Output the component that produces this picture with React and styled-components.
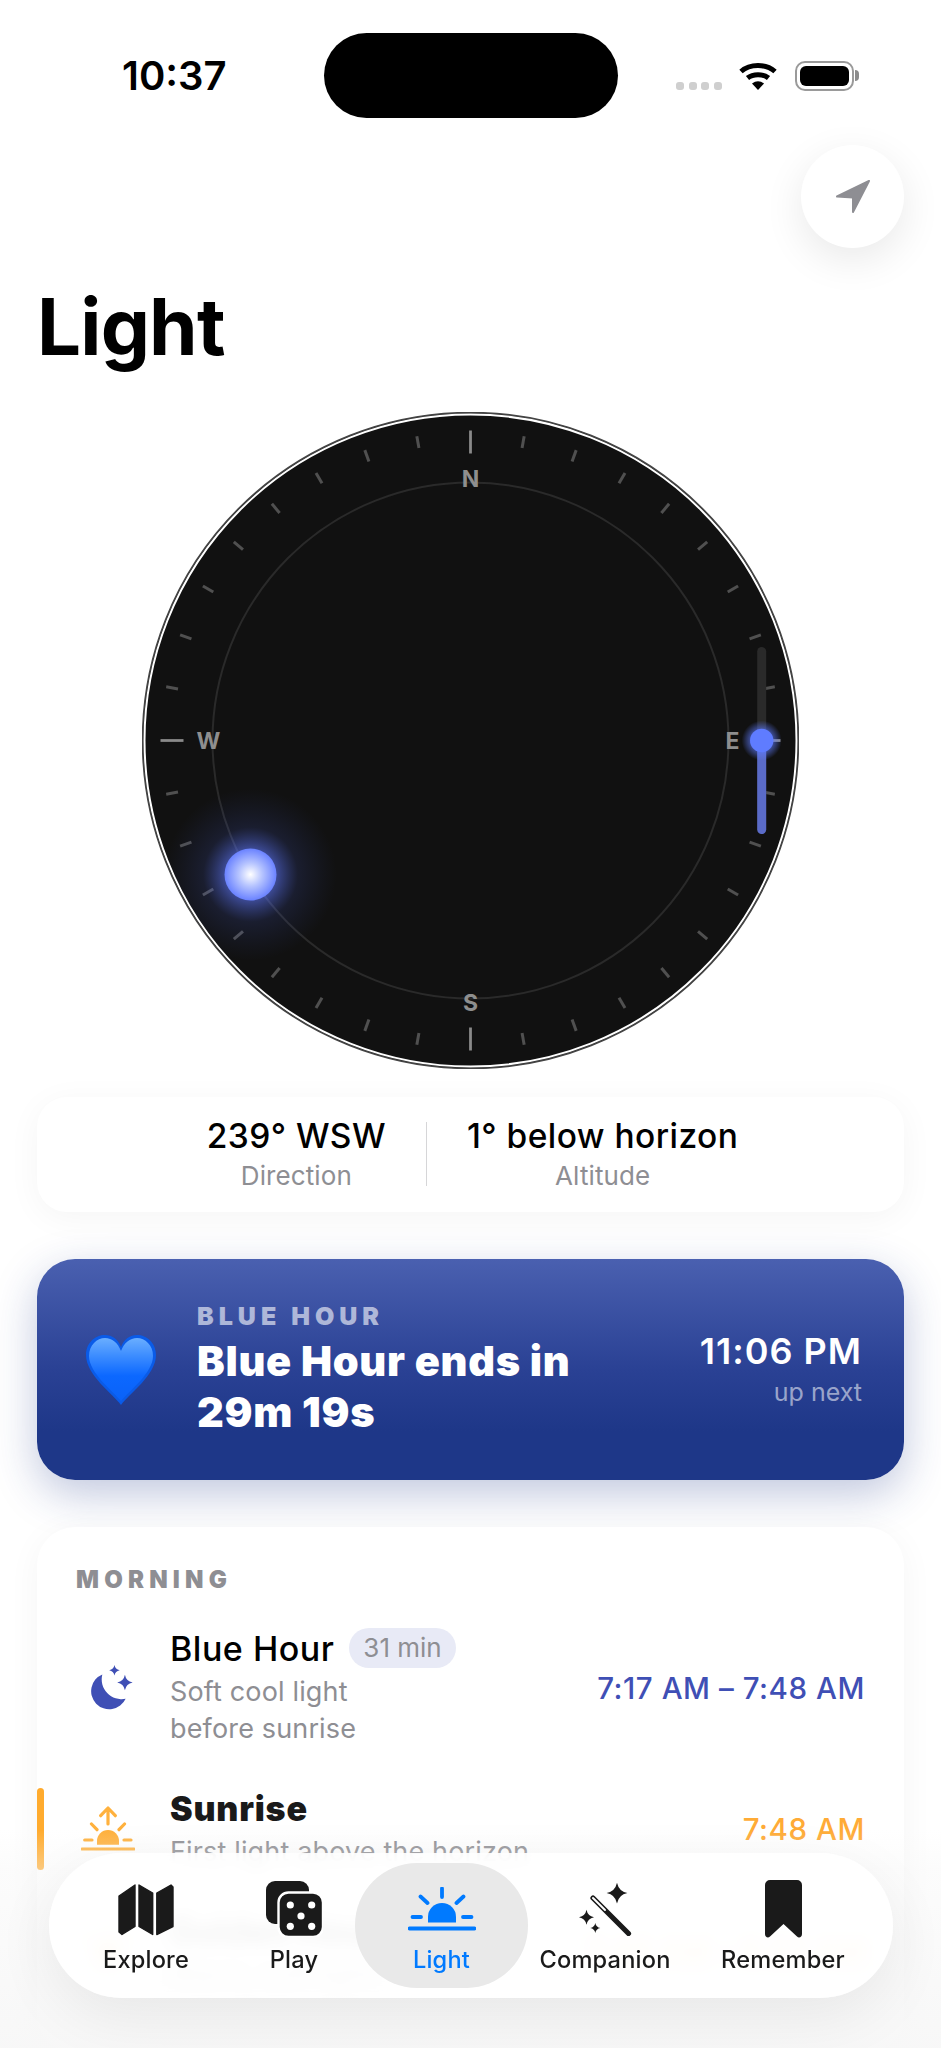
import React from "react"
import styled, { createGlobalStyle } from "styled-components"

const GlobalStyle = createGlobalStyle`
  html, body {
    margin: 0;
    padding: 0;
    background: #fff;
    font-family: Inter, "Liberation Sans", sans-serif;
    -webkit-font-smoothing: antialiased;
  }
`

const Screen = styled.div`
  position: relative;
  width: 941px;
  height: 2048px;
  overflow: hidden;
  background: #fff;
  padding: 0 37px;
  box-sizing: border-box;
`

const StatusBar = styled.div`
  display: grid;
  grid-template-columns: 287px 294px 1fr;
  align-items: center;
  padding-top: 33px;
  height: 85px;
`

const Clock = styled.div`
  padding-left: 85px;
  font-size: 40px;
  font-weight: 600;
  color: #000;
`

const Island = styled.div`
  height: 85px;
  border-radius: 43px;
  background: #000;
`

const StatusIcons = styled.div`
  display: flex;
  align-items: center;
  padding-left: 58px;
`

const SignalDots = styled.div`
  display: flex;
  gap: 4.5px;
  margin: 21px 17px 0 0;
`

const SignalDot = styled.span`
  width: 8px;
  height: 8px;
  border-radius: 3px;
  background: #cfcfcf;
`

const Battery = styled.div`
  position: relative;
  box-sizing: border-box;
  width: 59px;
  height: 30px;
  margin-left: 18px;
  padding: 3px;
  border: 2px solid #9a9a9a;
  border-radius: 10px;

  &::before {
    content: "";
    display: block;
    height: 100%;
    border-radius: 6px;
    background: #000;
  }

  &::after {
    content: "";
    position: absolute;
    right: -7px;
    top: 7px;
    width: 4px;
    height: 11px;
    border-radius: 0 4px 4px 0;
    background: #8a8a8a;
  }
`

const LocateRow = styled.div`
  display: flex;
  justify-content: flex-end;
  margin-top: 27px;
`

const LocateButton = styled.button`
  display: flex;
  align-items: center;
  justify-content: center;
  width: 103px;
  height: 103px;
  padding: 0;
  border: 0;
  border-radius: 50%;
  background: #fff;
  box-shadow: 0 12px 40px rgba(0, 0, 0, 0.09);
`

const Title = styled.h1`
  margin: 32px 0 0;
  font-size: 78px;
  line-height: 94px;
  font-weight: 700;
  letter-spacing: -0.8px;
  color: #000;
`

const DialWrap = styled.div`
  display: flex;
  justify-content: center;
  margin-top: 38px;
`

const Card = styled.section`
  background: #fff;
  box-shadow: 0 6px 34px rgba(0, 0, 0, 0.045);
`

const ReadoutCard = styled(Card)`
  display: flex;
  justify-content: center;
  gap: 40px;
  margin-top: 28px;
  padding: 19px 0 20px 4px;
  border-radius: 30px;
`

const Readout = styled.div`
  text-align: center;
`

const ReadoutValue = styled.div`
  font-size: 33.5px;
  line-height: 40px;
  font-weight: 500;
  letter-spacing: 0.45px;
  color: #000;
`

const ReadoutLabel = styled.div`
  margin-top: 4px;
  font-size: 26px;
  line-height: 32px;
  letter-spacing: 0.1px;
  color: #8e8e93;
`

const ReadoutDivider = styled.div`
  width: 1px;
  margin: 6px 0;
  background: #d6d6d8;
`

const NextCard = styled.section`
  display: flex;
  align-items: center;
  gap: 41px;
  height: 221px;
  box-sizing: border-box;
  margin-top: 47px;
  padding: 0 42px 0 49px;
  border-radius: 38px;
  color: #fff;
  background: linear-gradient(180deg, #4a60b0 0%, #2a4194 50%, #1e3788 78%);
  box-shadow: 0 14px 44px rgba(30, 55, 136, 0.28);
`

const NextBody = styled.div`
  flex: 1;
`

const NextEyebrow = styled.div`
  font-size: 25px;
  line-height: 30px;
  font-weight: 900;
  letter-spacing: 5px;
  color: rgba(255, 255, 255, 0.6);
`

const NextTitle = styled.div`
  margin-top: 5px;
  font-size: 41.5px;
  line-height: 51px;
  font-weight: 900;
  letter-spacing: 0.7px;
`

const NextSide = styled.div`
  text-align: right;
`

const NextTime = styled.div`
  font-size: 36px;
  line-height: 40px;
  font-weight: 600;
  letter-spacing: 1px;
`

const NextHint = styled.div`
  margin-top: 5px;
  font-size: 25px;
  line-height: 32px;
  color: rgba(255, 255, 255, 0.55);
`

const ScheduleCard = styled(Card)`
  margin-top: 47px;
  padding: 38px 0 60px;
  border-radius: 38px;
`

const SectionLabel = styled.div`
  padding-left: 39px;
  margin-bottom: 33px;
  font-size: 24px;
  line-height: 30px;
  font-weight: 900;
  letter-spacing: 5.2px;
  color: #8e8e93;
`

const Rows = styled.div`
  display: flex;
  flex-direction: column;
  gap: 41px;
`

const Row = styled.div`
  position: relative;
  display: grid;
  grid-template-columns: 64px 1fr auto;
  align-items: center;
  column-gap: 30px;
  padding: 0 39px 0 39px;
`

const RowAccent = styled.span`
  position: absolute;
  left: 0;
  top: 0;
  bottom: 0;
  width: 7px;
  border-radius: 4px;
  background: #ffab2e;
`

const RowIcon = styled.div`
  display: flex;
  justify-content: center;
  padding-left: ${props => props.$nudge || 0}px;
`

const NameLine = styled.div`
  display: flex;
  align-items: center;
  gap: 15px;
  height: 40px;
`

const RowName = styled.div`
  font-size: 34px;
  font-weight: ${props => (props.$active ? 900 : 500)};
  letter-spacing: ${props => (props.$active ? 0.8 : 0.5)}px;
  color: ${props => (props.$active ? "#1a1a1a" : "#000")};
`

const Chip = styled.span`
  height: 40px;
  padding: 0 14px;
  border-radius: 20px;
  font-size: 26px;
  line-height: 40px;
  color: #8e8e93;
  background: #e8eaf6;
`

const RowSub = styled.div`
  margin-top: 5px;
  font-size: 27px;
  line-height: 37px;
  letter-spacing: 0.15px;
  color: #8e8e93;
`

const RowTime = styled.div`
  font-size: 29.5px;
  font-weight: 500;
  letter-spacing: 0.55px;
  color: ${props => props.$color};
`

const BottomFade = styled.div`
  position: absolute;
  left: 0;
  right: 0;
  bottom: 0;
  height: 218px;
  background: linear-gradient(
    180deg,
    rgba(247, 247, 247, 0) 0%,
    rgba(247, 247, 247, 0.4) 18%,
    rgba(247, 247, 247, 0.95) 100%
  );
`

const TabBar = styled.nav`
  position: absolute;
  left: 49px;
  top: 1853px;
  display: grid;
  grid-template-columns: 174px 122px 173px 154px 202px;
  box-sizing: border-box;
  width: 844px;
  height: 145px;
  padding: 10px;
  border-radius: 73px;
  background: rgba(255, 255, 255, 0.87);
  backdrop-filter: blur(7px);
  box-shadow: 0 18px 60px rgba(0, 0, 0, 0.07);
`

const Tab = styled.div`
  display: flex;
  flex-direction: column;
  align-items: center;
  border-radius: 62px;
  background: ${props => (props.$active ? "#e9e9e9" : "transparent")};
  color: ${props => (props.$active ? "#007aff" : "#1a1a1a")};
`

const TabIcon = styled.div`
  display: flex;
  align-items: center;
  justify-content: center;
  height: 66px;
  margin-top: 13px;
`

const TabLabel = styled.div`
  margin-top: 4px;
  font-size: 23.6px;
  line-height: 28px;
  font-weight: 500;
  letter-spacing: 0.2px;
`

const star = (cx, cy, r) => {
  const k = r * 0.16
  return `M${cx} ${cy - r}Q${cx + k} ${cy - k} ${cx + r} ${cy}Q${cx + k} ${cy + k} ${cx} ${cy + r}Q${cx - k} ${cy + k} ${cx - r} ${cy}Q${cx - k} ${cy - k} ${cx} ${cy - r}Z`
}

const Dial = () => {
  const ticks = []
  for (let deg = 0; deg < 360; deg += 10) {
    if (deg % 90 === 0) continue
    ticks.push(
      <line
        key={deg}
        x1="0"
        y1="-297"
        x2="0"
        y2="-309"
        stroke="#505050"
        strokeWidth="3"
        transform={`rotate(${deg})`}
      />
    )
  }
  return (
    <svg width="657" height="657" viewBox="-328.5 -328.5 657 657">
      <defs>
        <radialGradient id="sunCore">
          <stop offset="0%" stopColor="#ffffff" />
          <stop offset="45%" stopColor="#b6c4ff" />
          <stop offset="100%" stopColor="#6a82ff" />
        </radialGradient>
        <radialGradient id="sunGlow">
          <stop offset="30%" stopColor="#5f78ff" stopOpacity="0.55" />
          <stop offset="55%" stopColor="#4a60d0" stopOpacity="0.16" />
          <stop offset="100%" stopColor="#3a4fb0" stopOpacity="0" />
        </radialGradient>
        <radialGradient id="knobGlow">
          <stop offset="55%" stopColor="#5f7cff" stopOpacity="0.6" />
          <stop offset="100%" stopColor="#5f7cff" stopOpacity="0" />
        </radialGradient>
        <clipPath id="diskClip">
          <circle r="325" />
        </clipPath>
      </defs>
      <circle r="328" fill="#111" stroke="#444" strokeWidth="1.5" />
      <circle r="326" fill="#111" stroke="#fff" strokeWidth="2" />
      <circle r="258" fill="none" stroke="#2a2a2a" strokeWidth="2" />
      {ticks}
      {[0, 90, 180, 270].map(deg => (
        <line
          key={deg}
          x1="0"
          y1="-287"
          x2="0"
          y2="-310"
          stroke="#8a8a8a"
          strokeWidth="2.8"
          transform={`rotate(${deg})`}
        />
      ))}
      <g fill="#8e8e8e" fontFamily="Inter, sans-serif" fontSize="23" fontWeight="700" textAnchor="middle">
        <text x="0" y="-254">N</text>
        <text x="262" y="8">E</text>
        <text x="0" y="270">S</text>
        <text x="-262" y="8">W</text>
      </g>
      <g clipPath="url(#diskClip)">
        <circle cx="-220" cy="134" r="86" fill="url(#sunGlow)" />
      </g>
      <circle cx="-220" cy="134" r="26" fill="url(#sunCore)" />
      <rect x="286.7" y="-93.5" width="9" height="187" rx="4.5" fill="#2a2a2a" />
      <path d="M286.7 0H295.7V89a4.5 4.5 0 0 1-9 0Z" fill="#5a6bc8" />
      <circle cx="291.2" cy="0" r="20" fill="url(#knobGlow)" />
      <circle cx="291.2" cy="0" r="11.7" fill="#5f7cff" />
    </svg>
  )
}

const Wifi = () => (
  <svg width="38" height="29" viewBox="0 0 38 29" fill="none" stroke="#000" strokeWidth="5">
    <path d="M2 10.5C11 2.5 27 2.5 36 10.5" />
    <path d="M8.5 17C14 12.5 24 12.5 29.5 17" />
    <path d="M13 22.5Q19 18 25 22.5L19 29Z" fill="#000" stroke="none" />
  </svg>
)

const LocateIcon = () => (
  <svg width="36" height="35" viewBox="0 0 36 35">
    <path
      d="M34 2L2 17.5L18 18.5L18 33Z"
      fill="#8e8e93"
      stroke="#8e8e93"
      strokeWidth="2"
      strokeLinejoin="round"
    />
  </svg>
)

const Heart = () => (
  <svg width="70" height="70" viewBox="0 0 70 70">
    <defs>
      <linearGradient id="heartFill" x1="0" y1="0" x2="0" y2="1">
        <stop offset="0%" stopColor="#6aaeff" />
        <stop offset="28%" stopColor="#3d8dff" />
        <stop offset="60%" stopColor="#0c68ff" />
        <stop offset="100%" stopColor="#0a62f8" />
      </linearGradient>
    </defs>
    <path
      d="M35 70C27 59 0 40 0 20C0 8 9 0 19 0C26 0 32 4 35 12C38 4 44 0 51 0C61 0 70 8 70 20C70 40 43 59 35 70Z"
      fill="#0a5be8"
    />
    <path
      d="M35 66C27 56 3 38 3 21C3 10 11 3 19 3C26 3 32 8 35 16C38 8 44 3 51 3C59 3 67 10 67 21C67 38 43 56 35 66Z"
      fill="url(#heartFill)"
    />
  </svg>
)

const MoonIcon = () => (
  <svg width="44" height="45" viewBox="0 0 42 43" fill="#3f4fb5">
    <path d="M12.7 9A17.3 17.3 0 1 0 35 32.3A19 19 0 0 1 12.7 9Z" />
    <path d={star(34.3, 16.7, 7.4)} />
    <path d={star(24.3, 5, 5)} />
  </svg>
)

const SunriseIcon = () => (
  <svg width="54" height="46" viewBox="-1 -2 54 46" fill="none" stroke="#ffb13d" strokeWidth="3.2" strokeLinecap="round" strokeLinejoin="round">
    <path d="M26 16V0M18.7 7.7L26 0L33.3 7.7" />
    <path d="M9.5 16L15 21.7M42.5 16L37 21.7M2.7 32H10M42 32H49M0 41H52" />
    <path d="M15 36.7V33A11 11 0 0 1 37 33V36.7Z" fill="#ffb13d" stroke="none" />
  </svg>
)

const GoldenIcon = () => (
  <svg width="54" height="46" viewBox="-1 -2 54 46" fill="none" stroke="#ffc566" strokeWidth="3.2" strokeLinecap="round">
    <circle cx="26" cy="22" r="11" fill="#ffc566" stroke="none" />
    <path d="M26 2V6M9 8L12 11M43 8L40 11" />
  </svg>
)

const MapIcon = () => (
  <svg width="56" height="53" viewBox="0 0 56 53" fill="#1a1a1a" stroke="#1a1a1a" strokeWidth="1.4" strokeLinejoin="round">
    <path d="M1 13L17 2V43.5L4 51.5L1 49Z" />
    <path d="M21 2L34.7 10V51.5L21 43.5Z" />
    <path d="M38.8 10L53 2L55 4V43.5L38.8 51.5Z" />
  </svg>
)

const DiceIcon = () => (
  <svg width="57" height="56" viewBox="0 0 57 56">
    <rect x="0" y="0" width="43" height="43" rx="9" fill="#1a1a1a" />
    <rect x="12.5" y="11.5" width="44.5" height="44.5" rx="10" fill="#1a1a1a" stroke="#fff" strokeWidth="2.4" />
    <g fill="#fff">
      <circle cx="24.3" cy="24" r="3.6" />
      <circle cx="45.7" cy="24" r="3.6" />
      <circle cx="35" cy="35" r="3.6" />
      <circle cx="24.3" cy="45.3" r="3.6" />
      <circle cx="45.7" cy="45.3" r="3.6" />
    </g>
  </svg>
)

const LightIcon = () => (
  <svg width="68" height="44" viewBox="0 0 68 44" fill="none" stroke="#007aff" strokeWidth="3.8" strokeLinecap="round">
    <path d="M34 1.5V10M12.5 9.5L19.5 16M55.5 9.5L48.5 16M4.5 30H13M55 30H63.5M1.5 41.5H66.5" />
    <path d="M20 35.5V30A14 14 0 0 1 48 30V35.5Z" fill="#007aff" stroke="none" />
  </svg>
)

const WandIcon = () => (
  <svg width="53" height="53" viewBox="0 0 53 53" fill="#1a1a1a">
    <path d={star(38, 10, 10.4)} />
    <path d={star(7.5, 34.3, 7.5)} />
    <path d={star(16.3, 45, 5)} />
    <line x1="14" y1="15" x2="49.5" y2="50.5" stroke="#1a1a1a" strokeWidth="5.2" strokeLinecap="round" />
    <line x1="14" y1="15" x2="26" y2="27" stroke="#fff" strokeWidth="2" strokeLinecap="round" />
  </svg>
)

const BookmarkIcon = () => (
  <svg width="37" height="58" viewBox="0 0 37 58" fill="#1a1a1a">
    <path d="M5 0H32A5 5 0 0 1 37 5V54C37 57 34 58.5 32 56.5L18.5 44L5 56.5C3 58.5 0 57 0 54V5A5 5 0 0 1 5 0Z" />
  </svg>
)

const tabs = [
  { label: "Explore", icon: <MapIcon /> },
  { label: "Play", icon: <DiceIcon /> },
  { label: "Light", icon: <LightIcon />, active: true },
  { label: "Companion", icon: <WandIcon /> },
  { label: "Remember", icon: <BookmarkIcon /> },
]

export default function App() {
  return (
    <Screen>
      <GlobalStyle />
      <StatusBar>
        <Clock>10:37</Clock>
        <Island />
        <StatusIcons>
          <SignalDots>
            <SignalDot />
            <SignalDot />
            <SignalDot />
            <SignalDot />
          </SignalDots>
          <Wifi />
          <Battery />
        </StatusIcons>
      </StatusBar>

      <LocateRow>
        <LocateButton aria-label="Locate">
          <LocateIcon />
        </LocateButton>
      </LocateRow>

      <Title>Light</Title>

      <DialWrap>
        <Dial />
      </DialWrap>

      <ReadoutCard>
        <Readout>
          <ReadoutValue>239° WSW</ReadoutValue>
          <ReadoutLabel>Direction</ReadoutLabel>
        </Readout>
        <ReadoutDivider />
        <Readout>
          <ReadoutValue>1° below horizon</ReadoutValue>
          <ReadoutLabel>Altitude</ReadoutLabel>
        </Readout>
      </ReadoutCard>

      <NextCard>
        <Heart />
        <NextBody>
          <NextEyebrow>BLUE HOUR</NextEyebrow>
          <NextTitle>
            Blue Hour ends in
            <br />
            29m 19s
          </NextTitle>
        </NextBody>
        <NextSide>
          <NextTime>11:06 PM</NextTime>
          <NextHint>up next</NextHint>
        </NextSide>
      </NextCard>

      <ScheduleCard>
        <SectionLabel>MORNING</SectionLabel>
        <Rows>
          <Row>
            <RowIcon $nudge={6}>
              <MoonIcon />
            </RowIcon>
            <div>
              <NameLine>
                <RowName>Blue Hour</RowName>
                <Chip>31 min</Chip>
              </NameLine>
              <RowSub>
                Soft cool light
                <br />
                before sunrise
              </RowSub>
            </div>
            <RowTime $color="#3f4fb5">7:17 AM – 7:48 AM</RowTime>
          </Row>
          <Row>
            <RowAccent />
            <RowIcon>
              <SunriseIcon />
            </RowIcon>
            <div>
              <NameLine>
                <RowName $active>Sunrise</RowName>
              </NameLine>
              <RowSub>First light above the horizon</RowSub>
            </div>
            <RowTime $color="#ffab36">7:48 AM</RowTime>
          </Row>
          <Row>
            <RowIcon>
              <GoldenIcon />
            </RowIcon>
            <div>
              <NameLine>
                <RowName>Golden Hour</RowName>
              </NameLine>
              <RowSub>Warm, soft light</RowSub>
            </div>
            <RowTime $color="#ffb84d">7:48 AM – 8:22 AM</RowTime>
          </Row>
        </Rows>
      </ScheduleCard>

      <BottomFade />

      <TabBar>
        {tabs.map(tab => (
          <Tab key={tab.label} $active={tab.active}>
            <TabIcon>{tab.icon}</TabIcon>
            <TabLabel>{tab.label}</TabLabel>
          </Tab>
        ))}
      </TabBar>
    </Screen>
  )
}
